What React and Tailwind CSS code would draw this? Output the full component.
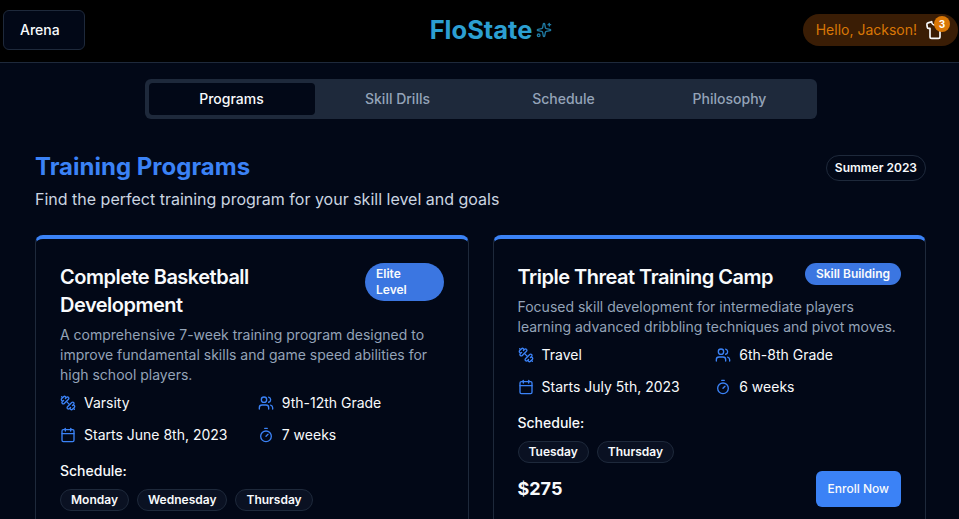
import React from 'react';
import { Sparkles, Shirt, Users, Calendar, Timer } from 'lucide-react';

const tabs = ['Programs', 'Skill Drills', 'Schedule', 'Philosophy'];

const programs = [
  {
    title: 'Complete Basketball Development',
    badge: 'Elite Level',
    description:
      'A comprehensive 7-week training program designed to improve fundamental skills and game speed abilities for high school players.',
    level: 'Varsity',
    grade: '9th-12th Grade',
    start: 'Starts June 8th, 2023',
    length: '7 weeks',
    days: ['Monday', 'Wednesday', 'Thursday'],
    price: '$350',
  },
  {
    title: 'Triple Threat Training Camp',
    badge: 'Skill Building',
    description:
      'Focused skill development for intermediate players learning advanced dribbling techniques and pivot moves.',
    level: 'Travel',
    grade: '6th-8th Grade',
    start: 'Starts July 5th, 2023',
    length: '6 weeks',
    days: ['Tuesday', 'Thursday'],
    price: '$275',
  },
];

// the dumbbell runs top-left to bottom-right here, unlike the one in the icon package
const Dumbbell = ({ className }) => (
  <svg
    className={className}
    viewBox="0 0 24 24"
    fill="none"
    stroke="currentColor"
    strokeWidth="2"
    strokeLinecap="round"
    strokeLinejoin="round"
  >
    <path d="M14.4 14.4 9.6 9.6" />
    <path d="M18.657 21.485a2 2 0 1 1-2.829-2.828l-1.767 1.768a2 2 0 1 1-2.829-2.829l6.364-6.364a2 2 0 1 1 2.829 2.829l-1.768 1.767a2 2 0 1 1 2.828 2.829z" />
    <path d="m21.5 21.5-1.4-1.4" />
    <path d="M3.9 3.9 2.5 2.5" />
    <path d="M6.404 12.768a2 2 0 1 1-2.829-2.829l1.768-1.767a2 2 0 1 1-2.828-2.829l2.828-2.828a2 2 0 1 1 2.829 2.828l1.767-1.768a2 2 0 1 1 2.829 2.829z" />
  </svg>
);

const Meta = ({ icon: Icon, children }) => (
  <div className="flex items-center gap-2 text-sm leading-5 text-[#f8fafc]">
    <Icon className="h-4 w-4 text-[#3b82f6]" />
    <span>{children}</span>
  </div>
);

const ProgramCard = ({ program }) => (
  <div className="rounded-lg border border-[#1e293b] border-t-4 border-t-[#3b82f6] bg-[#020817] p-6">
    <div className="flex items-start justify-between">
      <h3 className="text-xl leading-7 font-semibold tracking-tight text-[#f8fafc]">{program.title}</h3>
      <span className="rounded-full bg-[#3b76e1] px-[11px] py-[3px] text-xs leading-4 font-semibold text-[#f8fafc]">
        {program.badge}
      </span>
    </div>
    <p className="mt-1.5 text-sm leading-5 text-[#94a3b8]">{program.description}</p>
    <div className="mt-2 grid grid-cols-2 gap-3">
      <Meta icon={Dumbbell}>{program.level}</Meta>
      <Meta icon={Users}>{program.grade}</Meta>
      <Meta icon={Calendar}>{program.start}</Meta>
      <Meta icon={Timer}>{program.length}</Meta>
    </div>
    <p className="mt-4 text-sm leading-5 font-medium text-[#f8fafc]">Schedule:</p>
    <div className="mt-2 flex gap-2">
      {program.days.map((day) => (
        <span
          key={day}
          className="rounded-full border border-[#1e293b] bg-[#0a1122] px-2.5 py-0.5 text-xs leading-4 font-semibold text-[#f8fafc]"
        >
          {day}
        </span>
      ))}
    </div>
    <div className="mt-2 flex items-center justify-between">
      <span className="text-lg font-bold text-[#f8fafc]">{program.price}</span>
      <button className="h-9 rounded-md bg-[#3b82f6] px-3 text-xs font-medium text-[#f8fafc]">Enroll Now</button>
    </div>
  </div>
);

export default function App() {
  return (
    <div className="h-[519px] overflow-hidden bg-[#020817] font-['Inter',sans-serif] text-[#f8fafc]">
      <header className="flex h-[63px] items-center border-b border-[#1e293b] bg-black pr-px pb-[2px] pl-[3px]">
        <div className="flex-1">
          <button className="h-10 w-[82px] rounded-md border border-[#1e293b] bg-[#020817] pl-4 text-left text-sm font-medium">
            Arena
          </button>
        </div>
        <div className="ml-[21px] flex items-center gap-1">
          <span className="text-[25.5px] font-bold text-[#2c9fd1]">FloState</span>
          <Sparkles className="h-4 w-4 text-[#1f7aa3]" />
        </div>
        <div className="flex flex-1 justify-end">
          <div className="flex h-8 items-center gap-2 rounded-full bg-[#3a1d05] pr-[13px] pl-[13px]">
            <span className="text-sm text-[#d97706]">Hello, Jackson!</span>
            <div className="relative h-5 w-5">
              <Shirt className="h-5 w-5 text-[#f8fafc]" />
              <span className="absolute -top-1 -right-[5px] flex h-4 w-4 items-center justify-center rounded-full bg-[#d97706] text-[10px] font-bold text-white">
                3
              </span>
            </div>
          </div>
        </div>
      </header>

      <main className="pt-4 pr-[33px] pl-[35px]">
        <div className="mx-auto grid h-10 w-[672px] grid-cols-4 rounded-md bg-[#1e293b] p-1">
          {tabs.map((tab, i) => (
            <button
              key={tab}
              className={
                i === 0
                  ? 'rounded-sm bg-[#020817] text-sm font-medium text-[#f8fafc]'
                  : 'rounded-sm text-sm font-medium text-[#94a3b8]'
              }
            >
              {tab}
            </button>
          ))}
        </div>

        <div className="mt-8 flex items-start justify-between">
          <div>
            <h2 className="text-2xl leading-8 font-bold text-[#3b82f6]">Training Programs</h2>
            <p className="mt-1 text-base text-[#cbd5e1]">Find the perfect training program for your skill level and goals</p>
          </div>
          <span className="mt-1 rounded-full border border-[#1e293b] px-2 py-1 text-xs leading-4 font-semibold">
            Summer 2023
          </span>
        </div>

        <div className="mt-6 grid grid-cols-2 gap-6">
          {programs.map((program) => (
            <ProgramCard key={program.title} program={program} />
          ))}
        </div>
      </main>
    </div>
  );
}
